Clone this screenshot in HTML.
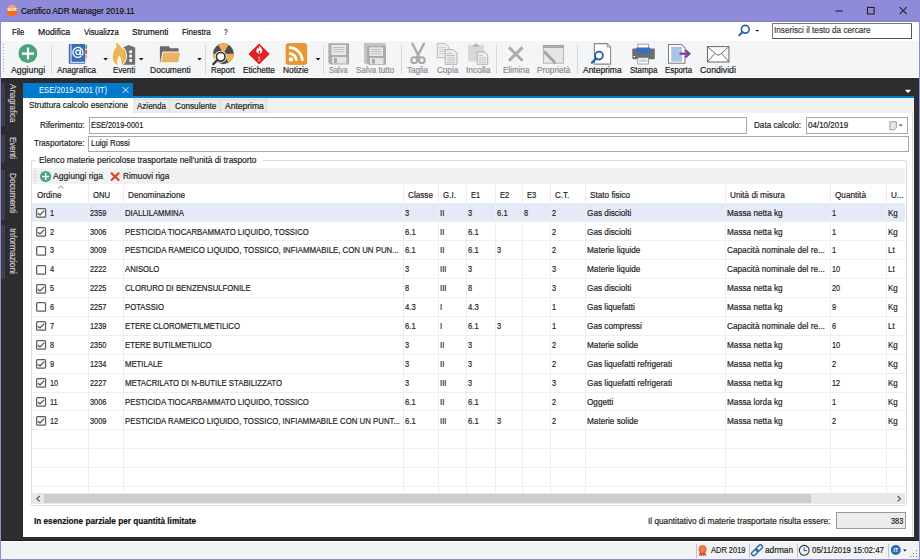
<!DOCTYPE html>
<html><head><meta charset="utf-8">
<style>
*{margin:0;padding:0;box-sizing:border-box}
html,body{width:920px;height:560px;overflow:hidden;background:#8f8bd8;font-family:"Liberation Sans",sans-serif}
.a{position:absolute}
.t{position:absolute;white-space:nowrap;line-height:1;font-family:"Liberation Sans",sans-serif}
svg{position:absolute;overflow:visible}
</style></head><body>
<!-- title bar -->
<div class="a" style="left:0;top:0;width:920px;height:22px;background:#8f8bd8"></div>
<div class="a" style="left:0;top:20px;width:920px;height:2px;background:#8a85d5"></div>
<!-- menu bar -->
<div class="a" style="left:1px;top:22px;width:918px;height:19px;background:#ffffff"></div>
<!-- toolbar -->
<div class="a" style="left:1px;top:41px;width:918px;height:38px;background:#f4f5f7"></div>
<div class="a" style="left:1px;top:77px;width:918px;height:1px;background:#ffffff"></div>
<!-- dark mdi area -->
<div class="a" style="left:1px;top:78px;width:918px;height:464px;background:#2d2d30"></div>
<div class="a" style="left:1px;top:540px;width:918px;height:1px;background:#202022"></div>
<!-- status bar -->
<div class="a" style="left:1px;top:541px;width:918px;height:1px;background:#ffffff"></div>
<div class="a" style="left:1px;top:542px;width:918px;height:17px;background:#f1f2f4"></div>

<!-- sidebar tabs -->
<div class="a" style="left:1px;top:83px;width:4px;height:43px;background:#3f3f46"></div>
<div class="a" style="left:1px;top:135px;width:4px;height:28px;background:#3f3f46"></div>
<div class="a" style="left:1px;top:170px;width:4px;height:50px;background:#3f3f46"></div>
<div class="a" style="left:1px;top:225px;width:4px;height:54px;background:#3f3f46"></div>

<!-- doc tab -->
<div class="a" style="left:23px;top:83px;width:110px;height:14px;background:#007acc"></div>
<div class="a" style="left:23px;top:96px;width:891px;height:2px;background:#007acc"></div>

<!-- content panel -->
<div class="a" style="left:23px;top:98px;width:891px;height:439px;background:#ffffff"></div>
<div class="a" style="left:23px;top:98px;width:891px;height:15px;background:#f0f0f0"></div>
<div class="a" style="left:23px;top:98px;width:110px;height:19px;background:#ffffff"></div>
<div class="a" style="left:133px;top:99px;width:134px;height:14px;background:#ebebeb;border-top:1px solid #dcdcdc"></div>
<div class="a" style="left:169px;top:99px;width:1px;height:14px;background:#dcdcdc"></div>
<div class="a" style="left:220px;top:99px;width:1px;height:14px;background:#dcdcdc"></div>
<div class="a" style="left:266px;top:99px;width:1px;height:14px;background:#dcdcdc"></div>
<div class="a" style="left:912px;top:113px;width:1px;height:424px;background:#d8d8d8"></div>

<!-- inputs -->
<div class="a" style="left:89px;top:117px;width:658px;height:17px;border:1px solid #a8a8a8;background:#fff"></div>
<div class="a" style="left:806px;top:117px;width:102px;height:17px;border:1px solid #a8a8a8;background:#fff"></div>
<div class="a" style="left:88px;top:136px;width:821px;height:16px;border:1px solid #a8a8a8;background:#fff"></div>

<!-- group box -->
<div class="a" style="left:31px;top:160px;width:876px;height:346px;border:1px solid #dcdcdc;border-radius:2px"></div>
<div class="a" style="left:36px;top:156px;width:226px;height:8px;background:#fff"></div>
<!-- group toolbar -->
<div class="a" style="left:32px;top:168px;width:873px;height:16px;background:#f0f1f3"></div>

<!-- grid -->
<div class="a" style="left:32px;top:184px;width:873px;height:19px;background:#ffffff"></div>
<div class="a" style="left:32px;top:203px;width:873px;height:19px;background:#e5eaf8"></div>
<div class="a" style="left:88px;top:185px;width:1px;height:18px;background:#ececec"></div>
<div class="a" style="left:88px;top:203px;width:1px;height:290px;background:#efefef"></div>
<div class="a" style="left:123px;top:185px;width:1px;height:18px;background:#ececec"></div>
<div class="a" style="left:123px;top:203px;width:1px;height:290px;background:#efefef"></div>
<div class="a" style="left:403px;top:185px;width:1px;height:18px;background:#ececec"></div>
<div class="a" style="left:403px;top:203px;width:1px;height:290px;background:#efefef"></div>
<div class="a" style="left:438px;top:185px;width:1px;height:18px;background:#ececec"></div>
<div class="a" style="left:438px;top:203px;width:1px;height:290px;background:#efefef"></div>
<div class="a" style="left:466px;top:185px;width:1px;height:18px;background:#ececec"></div>
<div class="a" style="left:466px;top:203px;width:1px;height:290px;background:#efefef"></div>
<div class="a" style="left:495px;top:185px;width:1px;height:18px;background:#ececec"></div>
<div class="a" style="left:495px;top:203px;width:1px;height:290px;background:#efefef"></div>
<div class="a" style="left:522px;top:185px;width:1px;height:18px;background:#ececec"></div>
<div class="a" style="left:522px;top:203px;width:1px;height:290px;background:#efefef"></div>
<div class="a" style="left:550px;top:185px;width:1px;height:18px;background:#ececec"></div>
<div class="a" style="left:550px;top:203px;width:1px;height:290px;background:#efefef"></div>
<div class="a" style="left:585px;top:185px;width:1px;height:18px;background:#ececec"></div>
<div class="a" style="left:585px;top:203px;width:1px;height:290px;background:#efefef"></div>
<div class="a" style="left:725px;top:185px;width:1px;height:18px;background:#ececec"></div>
<div class="a" style="left:725px;top:203px;width:1px;height:290px;background:#efefef"></div>
<div class="a" style="left:830px;top:185px;width:1px;height:18px;background:#ececec"></div>
<div class="a" style="left:830px;top:203px;width:1px;height:290px;background:#efefef"></div>
<div class="a" style="left:886px;top:185px;width:1px;height:18px;background:#ececec"></div>
<div class="a" style="left:886px;top:203px;width:1px;height:290px;background:#efefef"></div>
<div class="a" style="left:32px;top:221px;width:873px;height:1px;background:#efefef"></div>
<div class="a" style="left:32px;top:240px;width:873px;height:1px;background:#efefef"></div>
<div class="a" style="left:32px;top:259px;width:873px;height:1px;background:#efefef"></div>
<div class="a" style="left:32px;top:278px;width:873px;height:1px;background:#efefef"></div>
<div class="a" style="left:32px;top:297px;width:873px;height:1px;background:#efefef"></div>
<div class="a" style="left:32px;top:316px;width:873px;height:1px;background:#efefef"></div>
<div class="a" style="left:32px;top:335px;width:873px;height:1px;background:#efefef"></div>
<div class="a" style="left:32px;top:354px;width:873px;height:1px;background:#efefef"></div>
<div class="a" style="left:32px;top:373px;width:873px;height:1px;background:#efefef"></div>
<div class="a" style="left:32px;top:392px;width:873px;height:1px;background:#efefef"></div>
<div class="a" style="left:32px;top:410px;width:873px;height:1px;background:#efefef"></div>
<div class="a" style="left:32px;top:429px;width:873px;height:1px;background:#efefef"></div>
<div class="a" style="left:32px;top:448px;width:873px;height:1px;background:#efefef"></div>
<div class="a" style="left:32px;top:467px;width:873px;height:1px;background:#efefef"></div>
<div class="a" style="left:32px;top:486px;width:873px;height:1px;background:#efefef"></div>
<svg style="left:36px;top:208px" width="10" height="10" viewBox="0 0 10 10"><rect x="0.65" y="0.65" width="8.9" height="8.4" rx="0.9" fill="#fff" stroke="#5e5e5e" stroke-width="1.25"/><path d="M1.9 5.2 L4 7 L8.3 2.6" fill="none" stroke="#4a4a4a" stroke-width="1.15"/></svg>
<svg style="left:36px;top:227px" width="10" height="10" viewBox="0 0 10 10"><rect x="0.65" y="0.65" width="8.9" height="8.4" rx="0.9" fill="#fff" stroke="#5e5e5e" stroke-width="1.25"/><path d="M1.9 5.2 L4 7 L8.3 2.6" fill="none" stroke="#4a4a4a" stroke-width="1.15"/></svg>
<svg style="left:36px;top:246px" width="10" height="10" viewBox="0 0 10 10"><rect x="0.65" y="0.65" width="8.9" height="8.4" rx="0.9" fill="#fff" stroke="#5e5e5e" stroke-width="1.25"/></svg>
<svg style="left:36px;top:265px" width="10" height="10" viewBox="0 0 10 10"><rect x="0.65" y="0.65" width="8.9" height="8.4" rx="0.9" fill="#fff" stroke="#5e5e5e" stroke-width="1.25"/></svg>
<svg style="left:36px;top:284px" width="10" height="10" viewBox="0 0 10 10"><rect x="0.65" y="0.65" width="8.9" height="8.4" rx="0.9" fill="#fff" stroke="#5e5e5e" stroke-width="1.25"/><path d="M1.9 5.2 L4 7 L8.3 2.6" fill="none" stroke="#4a4a4a" stroke-width="1.15"/></svg>
<svg style="left:36px;top:302px" width="10" height="10" viewBox="0 0 10 10"><rect x="0.65" y="0.65" width="8.9" height="8.4" rx="0.9" fill="#fff" stroke="#5e5e5e" stroke-width="1.25"/></svg>
<svg style="left:36px;top:321px" width="10" height="10" viewBox="0 0 10 10"><rect x="0.65" y="0.65" width="8.9" height="8.4" rx="0.9" fill="#fff" stroke="#5e5e5e" stroke-width="1.25"/><path d="M1.9 5.2 L4 7 L8.3 2.6" fill="none" stroke="#4a4a4a" stroke-width="1.15"/></svg>
<svg style="left:36px;top:340px" width="10" height="10" viewBox="0 0 10 10"><rect x="0.65" y="0.65" width="8.9" height="8.4" rx="0.9" fill="#fff" stroke="#5e5e5e" stroke-width="1.25"/><path d="M1.9 5.2 L4 7 L8.3 2.6" fill="none" stroke="#4a4a4a" stroke-width="1.15"/></svg>
<svg style="left:36px;top:359px" width="10" height="10" viewBox="0 0 10 10"><rect x="0.65" y="0.65" width="8.9" height="8.4" rx="0.9" fill="#fff" stroke="#5e5e5e" stroke-width="1.25"/><path d="M1.9 5.2 L4 7 L8.3 2.6" fill="none" stroke="#4a4a4a" stroke-width="1.15"/></svg>
<svg style="left:36px;top:378px" width="10" height="10" viewBox="0 0 10 10"><rect x="0.65" y="0.65" width="8.9" height="8.4" rx="0.9" fill="#fff" stroke="#5e5e5e" stroke-width="1.25"/><path d="M1.9 5.2 L4 7 L8.3 2.6" fill="none" stroke="#4a4a4a" stroke-width="1.15"/></svg>
<svg style="left:36px;top:397px" width="10" height="10" viewBox="0 0 10 10"><rect x="0.65" y="0.65" width="8.9" height="8.4" rx="0.9" fill="#fff" stroke="#5e5e5e" stroke-width="1.25"/><path d="M1.9 5.2 L4 7 L8.3 2.6" fill="none" stroke="#4a4a4a" stroke-width="1.15"/></svg>
<svg style="left:36px;top:416px" width="10" height="10" viewBox="0 0 10 10"><rect x="0.65" y="0.65" width="8.9" height="8.4" rx="0.9" fill="#fff" stroke="#5e5e5e" stroke-width="1.25"/><path d="M1.9 5.2 L4 7 L8.3 2.6" fill="none" stroke="#4a4a4a" stroke-width="1.15"/></svg>

<!-- scrollbar -->
<div class="a" style="left:32px;top:493px;width:873px;height:11px;background:#e8e8e8"></div>
<div class="a" style="left:44px;top:494px;width:767px;height:9px;background:#cdcdcd"></div>

<!-- quantity box -->
<div class="a" style="left:836px;top:512px;width:70px;height:17px;border:1px solid #9a9a9a;background:#ececec"></div>

<!-- app icon -->
<svg style="left:0;top:0" width="22" height="21" viewBox="0 0 22 21">
<defs><linearGradient id="ag" x1="0" y1="0" x2="0" y2="1"><stop offset="0" stop-color="#f9b27a"/><stop offset="0.5" stop-color="#f39050"/><stop offset="0.55" stop-color="#ff6a06"/><stop offset="1" stop-color="#ff6a06"/></linearGradient></defs>
<path d="M9.9 5.2 L14.1 5.2 L17.1 8.2 L17.1 12.9 L14.1 15.9 L9.9 15.9 L6.9 12.9 L6.9 8.2 Z" fill="url(#ag)"/>
<text x="12" y="11.4" font-family="Liberation Sans" font-size="3.9" font-weight="bold" fill="#fff" text-anchor="middle">ADR</text>
</svg>
<!-- window controls -->
<svg style="left:830px;top:0" width="90" height="21" viewBox="0 0 90 21">
<rect x="5.5" y="10.4" width="7.5" height="1.1" fill="#222"/>
<rect x="37.5" y="7.4" width="6.6" height="6.6" fill="none" stroke="#222" stroke-width="1.1"/>
<path d="M69.6 7.2 L76.8 14.2 M76.8 7.2 L69.6 14.2" stroke="#222" stroke-width="1.1"/>
</svg>
<!-- search icon -->
<svg style="left:737px;top:23px" width="26" height="15" viewBox="0 0 26 15">
<circle cx="8.3" cy="6.3" r="3.9" fill="none" stroke="#2a64b0" stroke-width="1.7"/>
<path d="M5.6 9 L2.3 12.3" stroke="#2a64b0" stroke-width="2" stroke-linecap="round"/>
<path d="M18.3 7 L22.2 7 L20.25 8.8 Z" fill="#111"/>
</svg>
<!-- search box -->
<div class="a" style="left:772px;top:23px;width:140px;height:16px;border:1px solid #7a7a7a;border-right-color:#555;border-bottom-color:#555;background:#fff"></div>

<!-- toolbar grip -->
<svg style="left:2px;top:43px" width="4" height="32" viewBox="0 0 4 32">
<g fill="#a0a0a0"><rect x="1" y="1" width="1" height="1"/><rect x="1" y="4" width="1" height="1"/><rect x="1" y="7" width="1" height="1"/><rect x="1" y="10" width="1" height="1"/><rect x="1" y="13" width="1" height="1"/><rect x="1" y="16" width="1" height="1"/><rect x="1" y="19" width="1" height="1"/><rect x="1" y="22" width="1" height="1"/><rect x="1" y="25" width="1" height="1"/><rect x="1" y="28" width="1" height="1"/></g></svg>
<!-- separators -->
<div class="a" style="left:51px;top:45px;width:1px;height:29px;background:#d7d8da"></div>
<div class="a" style="left:205px;top:45px;width:1px;height:29px;background:#d7d8da"></div>
<div class="a" style="left:323px;top:45px;width:1px;height:29px;background:#d7d8da"></div>
<div class="a" style="left:401px;top:45px;width:1px;height:29px;background:#d7d8da"></div>
<div class="a" style="left:496px;top:45px;width:1px;height:29px;background:#d7d8da"></div>
<div class="a" style="left:577px;top:45px;width:1px;height:29px;background:#d7d8da"></div>
<!-- dropdown arrows -->
<svg style="left:0;top:0" width="920" height="80" viewBox="0 0 920 80"><g fill="#111">
<path d="M103.3 58 L107.9 58 L105.6 60.6 Z"/>
<path d="M138.9 58 L143.5 58 L141.2 60.6 Z"/>
<path d="M197.2 58 L201.8 58 L199.5 60.6 Z"/>
<path d="M315.8 58 L320.4 58 L318.1 60.6 Z"/>
</g></svg>

<!-- Aggiungi -->
<svg style="left:0;top:0" width="40" height="70" viewBox="0 0 40 70">
<circle cx="27.9" cy="53.5" r="9.4" fill="#4ba57a"/>
<rect x="26.9" y="47.6" width="2.2" height="11.9" fill="#fff"/>
<rect x="21.9" y="52.5" width="12.2" height="2.3" fill="#fff"/>
</svg>
<!-- Anagrafica -->
<svg style="left:60px;top:40px" width="30" height="28" viewBox="60 40 30 28">
<rect x="68.8" y="44" width="16.4" height="19.8" rx="0.9" fill="#3a6db9"/>
<rect x="70.5" y="44.6" width="1" height="18" fill="#f4f7fb"/>
<rect x="70.5" y="61.8" width="14" height="1" fill="#f4f7fb"/>
<path d="M81.2 56.2 A5 5 0 1 1 82.9 52 L82.9 53.4 Q82.9 55 81.6 55 Q80.3 55 80.3 53.4 L80.3 49.5" fill="none" stroke="#fff" stroke-width="1.2"/>
<circle cx="78" cy="52.3" r="2.2" fill="none" stroke="#fff" stroke-width="1.2"/>
<rect x="85.4" y="44.9" width="1.7" height="3.9" fill="#3fa86a"/>
<rect x="85.4" y="49.9" width="1.7" height="4" fill="#d9502a"/>
<rect x="85.4" y="55" width="1.7" height="3.7" fill="#f0b050"/>
</svg>
<!-- Eventi -->
<svg style="left:108px;top:40px" width="32" height="28" viewBox="108 40 32 28">
<path d="M123 47.6 L128.6 45 L135.2 47.6 L135.2 64.8 L123 64.8 Z" fill="#707070"/>
<rect x="129.3" y="50.4" width="2.7" height="2.7" fill="#fff"/>
<rect x="129.3" y="54.7" width="2.7" height="2.7" fill="#fff"/>
<rect x="129.3" y="59.1" width="2.7" height="2.7" fill="#fff"/>
<path d="M116.5 43 C118.5 44.5 121 46.5 121.8 49.5 L123.3 48.8 C125.5 51.5 126 54 125.8 57 C125.5 60.5 123.8 63 121.6 64.4 C122.5 62 122 58.5 119.3 54.8 C117.5 57.5 115.8 60.5 117 64.4 C114.5 63 113 60.5 113.1 57.5 C113.2 54 114.5 51 115.3 48.6 L116 49.8 C116.8 47.5 117 45.5 116.5 43 Z" fill="#fff" stroke="#fff" stroke-width="2.4" stroke-linejoin="round"/>
<path d="M116.5 43 C118.5 44.5 121 46.5 121.8 49.5 L123.3 48.8 C125.5 51.5 126 54 125.8 57 C125.5 60.5 123.8 63 121.6 64.4 C122.5 62 122 58.5 119.3 54.8 C117.5 57.5 115.8 60.5 117 64.4 C114.5 63 113 60.5 113.1 57.5 C113.2 54 114.5 51 115.3 48.6 L116 49.8 C116.8 47.5 117 45.5 116.5 43 Z" fill="#ecb35e" stroke="#f1b42c" stroke-width="0.9" stroke-linejoin="round"/>
</svg>
<!-- Documenti -->
<svg style="left:155px;top:40px" width="30" height="28" viewBox="155 40 30 28">
<path d="M159.9 46.2 L168.8 46.2 L170.3 48.2 L178.6 48.2 L178.6 62.3 L159.9 62.3 Z" fill="#6a6a6a"/>
<path d="M162.9 52 L180.8 52 L178.6 62.8 L160.7 62.8 Z" fill="#e9b35f" stroke="#fff" stroke-width="0.9" stroke-linejoin="round"/>
</svg>
<!-- Report -->
<svg style="left:208px;top:40px" width="30" height="28" viewBox="208 40 30 28">
<circle cx="223.4" cy="53.75" r="10.4" fill="#4d4d4d"/>
<path d="M223.4 53.75 L218.2 44.7 A10.4 10.4 0 0 1 228.6 44.7 Z" fill="#eeb055"/>
<path d="M223.4 53.75 L233.8 53.75 A10.4 10.4 0 0 1 228.6 62.8 Z" fill="#eeb055"/>
<path d="M223.4 53.75 L218.2 62.8 A10.4 10.4 0 0 1 213 53.75 Z" fill="#eeb055"/>
<circle cx="220.75" cy="56.75" r="5.9" fill="#fff"/>
<path d="M217.5 60 L213 64.5" stroke="#fff" stroke-width="4" stroke-linecap="round"/>
<circle cx="220.75" cy="56.75" r="4.3" fill="#fff" stroke="#3a3a3a" stroke-width="1.7"/>
<path d="M217.3 60.2 L213.3 64.2" stroke="#3a3a3a" stroke-width="2.4" stroke-linecap="round"/>
</svg>
<!-- Etichette -->
<svg style="left:244px;top:40px" width="30" height="28" viewBox="244 40 30 28">
<path d="M259.1 43 L270.2 54 L259.1 65 L248 54 Z" fill="#e02424" stroke="#fff" stroke-width="0.8" stroke-linejoin="round"/>
<path d="M259.2 45.4 C260.3 47 262.4 48.6 262.3 50.9 C262.2 52.6 260.9 53.5 259.2 53.5 C257.5 53.5 256.2 52.5 256.3 50.7 C256.4 49.3 257.3 48.6 257.8 47.6 C258.2 48.3 258.4 48.8 258.7 49.1 C259.2 47.9 259.4 46.6 259.2 45.4 Z" fill="#fff"/>
<ellipse cx="259.4" cy="51.9" rx="0.9" ry="1.2" fill="#e02424"/>
<path d="M257.9 57.3 L260 57.3 L258.9 58.8 C260.1 58.9 260.3 61 258.6 61 C258.2 61 257.9 60.8 257.8 60.6" fill="none" stroke="#fff" stroke-width="0.7"/>
</svg>
<!-- Notizie -->
<svg style="left:282px;top:40px" width="30" height="28" viewBox="282 40 30 28">
<rect x="286.1" y="43.6" width="20.6" height="20.8" rx="2.2" fill="#e9982f" stroke="#dc8a26" stroke-width="0.8"/>
<circle cx="290.9" cy="59.4" r="2.2" fill="#fff"/>
<path d="M289 53.3 A7.3 7.3 0 0 1 296.3 60.9" fill="none" stroke="#fff" stroke-width="2.8"/>
<path d="M289 47.6 A13 13 0 0 1 302.2 60.9" fill="none" stroke="#fff" stroke-width="2.8"/>
</svg>
<!-- Salva -->
<svg style="left:324px;top:40px" width="30" height="28" viewBox="324 40 30 28">
<path d="M328.4 43.3 L349.1 43.3 L349.1 64.4 L330.3 64.4 L328.4 62.5 Z" fill="#ababab"/>
<rect x="331.5" y="45" width="14.5" height="10" fill="#e9e9e9"/>
<rect x="333" y="47" width="11.5" height="0.8" fill="#b5b5b5"/>
<rect x="333" y="49.2" width="11.5" height="0.8" fill="#b5b5b5"/>
<rect x="333" y="51.4" width="11.5" height="0.8" fill="#b5b5b5"/>
<rect x="332" y="57" width="14.5" height="6.5" fill="#e4e4e4"/>
<rect x="334" y="58" width="3" height="5" fill="#a8a8a8"/>
</svg>
<!-- Salva tutto -->
<svg style="left:360px;top:40px" width="30" height="28" viewBox="360 40 30 28">
<path d="M363.9 43 L385.3 43 L386 45.5 L366.9 45.5 L366.9 64.8 L364 63 Z" fill="#c4c4c4"/>
<path d="M366.9 45.5 L386 45.5 L386 64.8 L368.5 64.8 L366.9 63.2 Z" fill="#ababab"/>
<rect x="369.5" y="47.3" width="13.5" height="8.7" fill="#e9e9e9"/>
<rect x="371" y="49" width="10.5" height="0.8" fill="#b5b5b5"/>
<rect x="371" y="51.2" width="10.5" height="0.8" fill="#b5b5b5"/>
<rect x="371" y="53.4" width="10.5" height="0.8" fill="#b5b5b5"/>
<rect x="370" y="58" width="13.5" height="6" fill="#e4e4e4"/>
<rect x="372" y="59" width="2.8" height="4.6" fill="#a8a8a8"/>
</svg>
<!-- Taglia -->
<svg style="left:404px;top:40px" width="30" height="28" viewBox="404 40 30 28">
<path d="M412.4 43.8 L419.2 57 M423.9 43.8 L417.1 57" stroke="#a9a9a9" stroke-width="2.4" stroke-linecap="round"/>
<circle cx="414.2" cy="60.2" r="2.9" fill="none" stroke="#a9a9a9" stroke-width="2"/>
<circle cx="421.8" cy="60.2" r="2.9" fill="none" stroke="#a9a9a9" stroke-width="2"/>
</svg>
<!-- Copia -->
<svg style="left:434px;top:40px" width="30" height="28" viewBox="434 40 30 28">
<path d="M437.3 43.5 L445.5 43.5 L449 47 L449 57.7 L437.3 57.7 Z" fill="#ededed" stroke="#b9b9b9" stroke-width="0.9"/>
<g fill="#c5c5c5"><rect x="439" y="47" width="6" height="0.7"/><rect x="439" y="49" width="7" height="0.7"/><rect x="439" y="51" width="7" height="0.7"/><rect x="439" y="53" width="7" height="0.7"/></g>
<path d="M445.2 49.7 L453.5 49.7 L457 53.2 L457 64.3 L445.2 64.3 Z" fill="#ededed" stroke="#aaaaaa" stroke-width="0.9"/>
<g fill="#b5b5b5"><rect x="447" y="53" width="5" height="0.8"/><rect x="447" y="55.2" width="8" height="0.8"/><rect x="447" y="57.4" width="8" height="0.8"/><rect x="447" y="59.6" width="8" height="0.8"/><rect x="447" y="61.8" width="8" height="0.8"/></g>
</svg>
<!-- Incolla -->
<svg style="left:464px;top:40px" width="30" height="28" viewBox="464 40 30 28">
<rect x="468.1" y="45.2" width="15.8" height="16.3" fill="#d7d7d7"/>
<path d="M472.5 46.5 L479.5 46.5 L479 45 L477.4 45 A1.4 1.4 0 0 0 474.6 45 L473 45 Z" fill="#b0b0b0"/>
<path d="M477.2 52 L485 52 L487.7 54.7 L487.7 64.3 L477.2 64.3 Z" fill="#ededed" stroke="#aaaaaa" stroke-width="0.9"/>
<g fill="#b5b5b5"><rect x="479" y="55.3" width="3" height="0.8"/><rect x="479" y="57.5" width="7" height="0.8"/><rect x="479" y="59.7" width="7" height="0.8"/><rect x="479" y="61.9" width="7" height="0.8"/></g>
</svg>
<!-- Elimina -->
<svg style="left:504px;top:40px" width="24" height="28" viewBox="504 40 24 28">
<path d="M509 47.4 L522.6 60.7 M522.6 47.4 L509 60.7" stroke="#ababab" stroke-width="3"/>
</svg>
<!-- Proprieta -->
<svg style="left:540px;top:40px" width="30" height="28" viewBox="540 40 30 28">
<rect x="543.4" y="45.4" width="20.2" height="17.8" fill="#e6e6e6" stroke="#b3b3b3" stroke-width="0.9"/>
<rect x="543" y="45" width="21" height="3" fill="#a9a9a9"/>
<path d="M544 51.6 L554 61.6" stroke="#a3a3a3" stroke-width="2.8"/><path d="M552.6 62.8 L556.4 64.4 L554.8 60.6 Z" fill="#a3a3a3"/>
</svg>
<!-- Anteprima -->
<svg style="left:588px;top:40px" width="30" height="28" viewBox="588 40 30 28">
<path d="M594.4 43.6 L607.2 43.6 L610.6 47 L610.6 64.1 L594.4 64.1 Z" fill="#fff" stroke="#858585" stroke-width="1.05"/>
<path d="M607.2 43.6 L607.2 47 L610.6 47" fill="#e0e0e0" stroke="#858585" stroke-width="0.8"/>
<circle cx="599" cy="55.6" r="3.9" fill="#fff" stroke="#1f5fae" stroke-width="1.8"/>
<path d="M596 58.7 L592 62.6" stroke="#1f5fae" stroke-width="2.3" stroke-linecap="round"/>
</svg>
<!-- Stampa -->
<svg style="left:628px;top:40px" width="30" height="28" viewBox="628 40 30 28">
<rect x="637.8" y="44.2" width="10.8" height="5" fill="#fff" stroke="#8a8a8a" stroke-width="0.8"/>
<rect x="632.3" y="48.4" width="22.5" height="10.9" rx="1" fill="#6e6e6e"/>
<rect x="636.3" y="47.6" width="14" height="6.1" rx="0.8" fill="#3a70bd"/>
<rect x="633.5" y="56" width="1.6" height="1" fill="#fff"/>
<rect x="637.8" y="57.8" width="10.8" height="6.2" fill="#fff" stroke="#8a8a8a" stroke-width="0.8"/>
<rect x="639" y="59.5" width="8.5" height="2.5" fill="#c5d6ec"/>
</svg>
<!-- Esporta -->
<svg style="left:664px;top:40px" width="30" height="28" viewBox="664 40 30 28">
<path d="M668.5 44.5 L681.5 44.5 L685 48 L685 63.3 L668.5 63.3 Z" fill="#fff" stroke="#7e7e7e" stroke-width="1.05"/>
<rect x="671.2" y="46.8" width="11" height="14.9" fill="#a9c4e6"/>
<rect x="682.2" y="48.5" width="2" height="4" fill="#fff"/>
<path d="M679.6 53.7 L688.5 53.7" stroke="#7b3aa8" stroke-width="2.2"/>
<path d="M685.3 50 L689.4 53.7 L685.3 57.4" fill="none" stroke="#7b3aa8" stroke-width="2.1"/>
</svg>
<!-- Condividi -->
<svg style="left:704px;top:40px" width="30" height="28" viewBox="704 40 30 28">
<rect x="707.5" y="46.6" width="21.4" height="15.4" fill="#fff" stroke="#727272" stroke-width="1.1"/>
<path d="M707.8 47 L716.5 54.5 Q718.2 55.8 720 54.5 L728.6 47" fill="none" stroke="#6a6a6a" stroke-width="1"/>
<path d="M707.8 61.6 L714.8 53.4 M728.6 61.6 L721.6 53.4" stroke="#6a6a6a" stroke-width="1"/>
</svg>

<!-- doc tab close x -->
<svg style="left:120px;top:84px" width="12" height="12" viewBox="120 84 12 12">
<path d="M122.8 87.2 L128.4 92.8 M128.4 87.2 L122.8 92.8" stroke="#fff" stroke-width="0.95"/>
</svg>
<!-- tab strip dropdown -->
<svg style="left:900px;top:86px" width="16" height="10" viewBox="900 86 16 10"><path d="M904.8 89.8 L911.2 89.8 L908 92.9 Z" fill="#fff"/></svg>

<!-- date picker icon -->
<svg style="left:886px;top:119px" width="20" height="14" viewBox="886 119 20 14">
<path d="M889.8 121.8 L896.3 121.8 L896.3 128 L894.3 129.8 L889.8 129.8 Z" fill="#e6e6e6" stroke="#8a8a8a" stroke-width="0.8"/>
<path d="M898.5 124.5 L902.8 124.5 L900.65 126.6 Z" fill="#2a5aa0"/>
</svg>

<!-- group toolbar -->
<svg style="left:32px;top:168px" width="100" height="17" viewBox="32 168 100 17">
<g fill="#a5a5a5"><rect x="34.5" y="171" width="1" height="1"/><rect x="34.5" y="174" width="1" height="1"/><rect x="34.5" y="177" width="1" height="1"/><rect x="34.5" y="180" width="1" height="1"/></g>
<circle cx="45.6" cy="176.5" r="5.6" fill="#4ba57a"/>
<rect x="45" y="173" width="1.4" height="7" fill="#fff"/>
<rect x="42.1" y="175.8" width="7" height="1.4" fill="#fff"/>
<path d="M111 172.8 L119.2 180.4 M119.2 172.8 L111 180.4" stroke="#d9401c" stroke-width="2.1"/>
</svg>
<!-- sort arrow -->
<svg style="left:56px;top:184px" width="10" height="6" viewBox="56 184 10 6"><path d="M58 188.5 L60.7 186 L63.4 188.5" fill="none" stroke="#666" stroke-width="0.8"/></svg>

<!-- scrollbar arrows -->
<svg style="left:32px;top:493px" width="880" height="12" viewBox="32 493 880 12">
<path d="M39.8 496 L36.8 498.7 L39.8 501.4" fill="none" stroke="#555" stroke-width="1.1"/>
<path d="M897.5 496 L900.5 498.7 L897.5 501.4" fill="none" stroke="#555" stroke-width="1.1"/>
</svg>

<!-- status bar -->
<div class="a" style="left:696px;top:544px;width:1px;height:14px;background:#c4c4c4"></div>
<div class="a" style="left:749px;top:544px;width:1px;height:14px;background:#c4c4c4"></div>
<div class="a" style="left:797px;top:544px;width:1px;height:14px;background:#c4c4c4"></div>
<div class="a" style="left:888px;top:544px;width:1px;height:14px;background:#c4c4c4"></div>
<svg style="left:690px;top:540px" width="230" height="20" viewBox="690 540 230 20">
<path d="M700 551.5 L698.6 556 L700.8 555.2 L702 556.6 L702.6 552.6 Z M705 551.5 L706.4 556 L704.2 555.2 L703 556.6 L702.4 552.6 Z" fill="#d04a2a"/>
<circle cx="702.5" cy="549.2" r="4" fill="#e8663a"/>
<circle cx="702.5" cy="549.2" r="2.6" fill="#f08050"/>
<g transform="rotate(-45 757 550.3)" fill="none" stroke="#2a64b0" stroke-width="1.4">
<rect x="750.2" y="548.3" width="7.6" height="4" rx="2"/>
<rect x="756.2" y="548.3" width="7.6" height="4" rx="2"/>
</g>
<circle cx="804.2" cy="550.3" r="4.9" fill="none" stroke="#333" stroke-width="1.1"/>
<path d="M804.2 547.2 L804.2 550.6 L807 550.6" fill="none" stroke="#3a6fc0" stroke-width="1.1"/>
<circle cx="895.8" cy="550" r="5" fill="#2a6ab8"/>
<text x="895.8" y="551.9" font-family="Liberation Sans" font-size="5" font-weight="bold" fill="#fff" text-anchor="middle">IT</text>
<path d="M903 549.5 L906.6 549.5 L904.8 551.5 Z" fill="#111"/>
<g fill="#777"><rect x="916" y="553" width="1" height="1"/><rect x="913" y="556" width="1" height="1"/><rect x="916" y="556" width="1" height="1"/><rect x="910.5" y="556" width="1" height="1"/><rect x="913" y="553" width="1" height="1"/><rect x="916" y="550" width="1" height="1"/></g>
</svg>

<span class="t" style="top:84.40px;font-size:9.2px;color:#c8c8c8;-webkit-text-stroke:0.2px #c8c8c8;writing-mode:vertical-rl;left:7.60px;transform-origin:0 0;transform:scaleY(0.8785);">Anagrafica</span>
<span class="t" style="top:137.30px;font-size:9.2px;color:#c8c8c8;-webkit-text-stroke:0.2px #c8c8c8;writing-mode:vertical-rl;left:7.60px;transform-origin:0 0;transform:scaleY(0.8612);">Eventi</span>
<span class="t" style="top:173.00px;font-size:9.2px;color:#c8c8c8;-webkit-text-stroke:0.2px #c8c8c8;writing-mode:vertical-rl;left:7.60px;transform-origin:0 0;transform:scaleY(0.9153);">Documenti</span>
<span class="t" style="top:228.20px;font-size:9.2px;color:#c8c8c8;-webkit-text-stroke:0.2px #c8c8c8;writing-mode:vertical-rl;left:7.60px;transform-origin:0 0;transform:scaleY(0.9191);">Informazioni</span>
<span class="t" style="top:6.81px;font-size:9.2px;color:#111;-webkit-text-stroke:0.2px #111;left:21.20px;transform-origin:0 0;transform:scaleX(0.8803);">Certifico ADR Manager 2019.11</span>
<span class="t" style="top:27.51px;font-size:9.2px;color:#111;-webkit-text-stroke:0.2px #111;left:11.70px;transform-origin:0 0;transform:scaleX(0.8304);">File</span>
<span class="t" style="top:27.51px;font-size:9.2px;color:#111;-webkit-text-stroke:0.2px #111;left:37.90px;transform-origin:0 0;transform:scaleX(0.9381);">Modifica</span>
<span class="t" style="top:27.51px;font-size:9.2px;color:#111;-webkit-text-stroke:0.2px #111;left:83.60px;transform-origin:0 0;transform:scaleX(0.8422);">Visualizza</span>
<span class="t" style="top:27.51px;font-size:9.2px;color:#111;-webkit-text-stroke:0.2px #111;left:131.90px;transform-origin:0 0;transform:scaleX(0.9281);">Strumenti</span>
<span class="t" style="top:27.51px;font-size:9.2px;color:#111;-webkit-text-stroke:0.2px #111;left:181.50px;transform-origin:0 0;transform:scaleX(0.8644);">Finestra</span>
<span class="t" style="top:27.51px;font-size:9.2px;color:#111;-webkit-text-stroke:0.2px #111;left:224.00px;transform-origin:0 0;transform:scaleX(0.6829);">?</span>
<span class="t" style="top:26.31px;font-size:9.2px;color:#3c3c3c;-webkit-text-stroke:0.2px #3c3c3c;left:774.00px;transform-origin:0 0;transform:scaleX(0.8881);">Inserisci il testo da cercare</span>
<span class="t" style="top:66.21px;font-size:9.2px;color:#1a1a1a;-webkit-text-stroke:0.2px #1a1a1a;left:10.80px;transform-origin:0 0;transform:scaleX(0.9534);">Aggiungi</span>
<span class="t" style="top:66.21px;font-size:9.2px;color:#1a1a1a;-webkit-text-stroke:0.2px #1a1a1a;left:57.20px;transform-origin:0 0;transform:scaleX(0.8899);">Anagrafica</span>
<span class="t" style="top:66.21px;font-size:9.2px;color:#1a1a1a;-webkit-text-stroke:0.2px #1a1a1a;left:113.00px;transform-origin:0 0;transform:scaleX(0.8729);">Eventi</span>
<span class="t" style="top:66.21px;font-size:9.2px;color:#1a1a1a;-webkit-text-stroke:0.2px #1a1a1a;left:149.60px;transform-origin:0 0;transform:scaleX(0.9266);">Documenti</span>
<span class="t" style="top:66.21px;font-size:9.2px;color:#1a1a1a;-webkit-text-stroke:0.2px #1a1a1a;left:211.30px;transform-origin:0 0;transform:scaleX(0.8594);">Report</span>
<span class="t" style="top:66.21px;font-size:9.2px;color:#1a1a1a;-webkit-text-stroke:0.2px #1a1a1a;left:243.00px;transform-origin:0 0;transform:scaleX(0.8923);">Etichette</span>
<span class="t" style="top:66.21px;font-size:9.2px;color:#1a1a1a;-webkit-text-stroke:0.2px #1a1a1a;left:283.30px;transform-origin:0 0;transform:scaleX(0.9077);">Notizie</span>
<span class="t" style="top:66.21px;font-size:9.2px;color:#8c8c8c;-webkit-text-stroke:0.2px #8c8c8c;left:329.00px;transform-origin:0 0;transform:scaleX(0.8049);">Salva</span>
<span class="t" style="top:66.21px;font-size:9.2px;color:#8c8c8c;-webkit-text-stroke:0.2px #8c8c8c;left:356.00px;transform-origin:0 0;transform:scaleX(0.8797);">Salva tutto</span>
<span class="t" style="top:66.21px;font-size:9.2px;color:#8c8c8c;-webkit-text-stroke:0.2px #8c8c8c;left:406.90px;transform-origin:0 0;transform:scaleX(0.8786);">Taglia</span>
<span class="t" style="top:66.21px;font-size:9.2px;color:#8c8c8c;-webkit-text-stroke:0.2px #8c8c8c;left:436.50px;transform-origin:0 0;transform:scaleX(0.8828);">Copia</span>
<span class="t" style="top:66.21px;font-size:9.2px;color:#8c8c8c;-webkit-text-stroke:0.2px #8c8c8c;left:465.60px;transform-origin:0 0;transform:scaleX(0.9186);">Incolla</span>
<span class="t" style="top:66.21px;font-size:9.2px;color:#8c8c8c;-webkit-text-stroke:0.2px #8c8c8c;left:502.60px;transform-origin:0 0;transform:scaleX(0.8830);">Elimina</span>
<span class="t" style="top:66.21px;font-size:9.2px;color:#8c8c8c;-webkit-text-stroke:0.2px #8c8c8c;left:536.90px;transform-origin:0 0;transform:scaleX(0.8959);">Proprietà</span>
<span class="t" style="top:66.21px;font-size:9.2px;color:#1a1a1a;-webkit-text-stroke:0.2px #1a1a1a;left:582.70px;transform-origin:0 0;transform:scaleX(0.9218);">Anteprima</span>
<span class="t" style="top:66.21px;font-size:9.2px;color:#1a1a1a;-webkit-text-stroke:0.2px #1a1a1a;left:629.70px;transform-origin:0 0;transform:scaleX(0.8620);">Stampa</span>
<span class="t" style="top:66.21px;font-size:9.2px;color:#1a1a1a;-webkit-text-stroke:0.2px #1a1a1a;left:665.30px;transform-origin:0 0;transform:scaleX(0.8525);">Esporta</span>
<span class="t" style="top:66.21px;font-size:9.2px;color:#1a1a1a;-webkit-text-stroke:0.2px #1a1a1a;left:700.10px;transform-origin:0 0;transform:scaleX(0.9498);">Condividi</span>
<span class="t" style="top:85.81px;font-size:9.2px;color:#ffffff;left:39.20px;transform-origin:0 0;transform:scaleX(0.8321);">ESE/2019-0001 (IT)</span>
<span class="t" style="top:101.21px;font-size:9.2px;color:#1e1e1e;-webkit-text-stroke:0.2px #1e1e1e;left:28.70px;transform-origin:0 0;transform:scaleX(0.8942);">Struttura calcolo esenzione</span>
<span class="t" style="top:102.31px;font-size:9.2px;color:#1e1e1e;-webkit-text-stroke:0.2px #1e1e1e;left:137.00px;transform-origin:0 0;transform:scaleX(0.8734);">Azienda</span>
<span class="t" style="top:102.31px;font-size:9.2px;color:#1e1e1e;-webkit-text-stroke:0.2px #1e1e1e;left:174.80px;transform-origin:0 0;transform:scaleX(0.8906);">Consulente</span>
<span class="t" style="top:102.31px;font-size:9.2px;color:#1e1e1e;-webkit-text-stroke:0.2px #1e1e1e;left:225.20px;transform-origin:0 0;transform:scaleX(0.9266);">Anteprima</span>
<span class="t" style="top:121.41px;font-size:9.2px;color:#1e1e1e;-webkit-text-stroke:0.2px #1e1e1e;left:39.60px;transform-origin:0 0;transform:scaleX(0.9004);">Riferimento:</span>
<span class="t" style="top:121.41px;font-size:9.2px;color:#1e1e1e;-webkit-text-stroke:0.2px #1e1e1e;left:91.40px;transform-origin:0 0;transform:scaleX(0.8062);">ESE/2019-0001</span>
<span class="t" style="top:139.21px;font-size:9.2px;color:#1e1e1e;-webkit-text-stroke:0.2px #1e1e1e;left:34.00px;transform-origin:0 0;transform:scaleX(0.8822);">Trasportatore:</span>
<span class="t" style="top:139.21px;font-size:9.2px;color:#1e1e1e;-webkit-text-stroke:0.2px #1e1e1e;left:90.80px;transform-origin:0 0;transform:scaleX(0.8634);">Luigi Rossi</span>
<span class="t" style="top:121.41px;font-size:9.2px;color:#1e1e1e;-webkit-text-stroke:0.2px #1e1e1e;left:753.70px;transform-origin:0 0;transform:scaleX(0.8847);">Data calcolo:</span>
<span class="t" style="top:121.41px;font-size:9.2px;color:#1e1e1e;-webkit-text-stroke:0.2px #1e1e1e;left:807.50px;transform-origin:0 0;transform:scaleX(0.8720);">04/10/2019</span>
<span class="t" style="top:156.21px;font-size:9.2px;color:#1e1e1e;-webkit-text-stroke:0.2px #1e1e1e;left:38.50px;transform-origin:0 0;transform:scaleX(0.9092);">Elenco materie pericolose trasportate nell'unità di trasporto</span>
<span class="t" style="top:171.91px;font-size:9.2px;color:#1e1e1e;-webkit-text-stroke:0.2px #1e1e1e;left:53.00px;transform-origin:0 0;transform:scaleX(0.9321);">Aggiungi riga</span>
<span class="t" style="top:171.91px;font-size:9.2px;color:#1e1e1e;-webkit-text-stroke:0.2px #1e1e1e;left:122.70px;transform-origin:0 0;transform:scaleX(0.9067);">Rimuovi riga</span>
<span class="t" style="top:190.51px;font-size:9.2px;color:#1e1e1e;-webkit-text-stroke:0.2px #1e1e1e;left:36.70px;transform-origin:0 0;transform:scaleX(0.8880);">Ordine</span>
<span class="t" style="top:190.51px;font-size:9.2px;color:#1e1e1e;-webkit-text-stroke:0.2px #1e1e1e;left:92.60px;transform-origin:0 0;transform:scaleX(0.8413);">ONU</span>
<span class="t" style="top:190.51px;font-size:9.2px;color:#1e1e1e;-webkit-text-stroke:0.2px #1e1e1e;left:127.60px;transform-origin:0 0;transform:scaleX(0.8931);">Denominazione</span>
<span class="t" style="top:190.51px;font-size:9.2px;color:#1e1e1e;-webkit-text-stroke:0.2px #1e1e1e;left:407.60px;transform-origin:0 0;transform:scaleX(0.8880);">Classe</span>
<span class="t" style="top:190.51px;font-size:9.2px;color:#1e1e1e;-webkit-text-stroke:0.2px #1e1e1e;left:442.60px;transform-origin:0 0;transform:scaleX(0.8693);">G.I.</span>
<span class="t" style="top:190.51px;font-size:9.2px;color:#1e1e1e;-webkit-text-stroke:0.2px #1e1e1e;left:470.60px;transform-origin:0 0;transform:scaleX(0.8226);">E1</span>
<span class="t" style="top:190.51px;font-size:9.2px;color:#1e1e1e;-webkit-text-stroke:0.2px #1e1e1e;left:499.60px;transform-origin:0 0;transform:scaleX(0.8226);">E2</span>
<span class="t" style="top:190.51px;font-size:9.2px;color:#1e1e1e;-webkit-text-stroke:0.2px #1e1e1e;left:526.60px;transform-origin:0 0;transform:scaleX(0.8226);">E3</span>
<span class="t" style="top:190.51px;font-size:9.2px;color:#1e1e1e;-webkit-text-stroke:0.2px #1e1e1e;left:554.60px;transform-origin:0 0;transform:scaleX(0.8693);">C.T.</span>
<span class="t" style="top:190.51px;font-size:9.2px;color:#1e1e1e;-webkit-text-stroke:0.2px #1e1e1e;left:589.60px;transform-origin:0 0;transform:scaleX(0.8927);">Stato fisico</span>
<span class="t" style="top:190.51px;font-size:9.2px;color:#1e1e1e;-webkit-text-stroke:0.2px #1e1e1e;left:729.60px;transform-origin:0 0;transform:scaleX(0.8937);">Unità di misura</span>
<span class="t" style="top:190.51px;font-size:9.2px;color:#1e1e1e;-webkit-text-stroke:0.2px #1e1e1e;left:834.60px;transform-origin:0 0;transform:scaleX(0.8904);">Quantità</span>
<span class="t" style="top:190.51px;font-size:9.2px;color:#1e1e1e;-webkit-text-stroke:0.2px #1e1e1e;left:890.60px;transform-origin:0 0;transform:scaleX(0.8834);">U...</span>
<span class="t" style="top:208.61px;font-size:9.2px;color:#1e1e1e;-webkit-text-stroke:0.2px #1e1e1e;left:50.40px;transform-origin:0 0;transform:scaleX(0.8039);">1</span>
<span class="t" style="top:208.61px;font-size:9.2px;color:#1e1e1e;-webkit-text-stroke:0.2px #1e1e1e;left:90.20px;transform-origin:0 0;transform:scaleX(0.8039);">2359</span>
<span class="t" style="top:208.61px;font-size:9.2px;color:#1e1e1e;-webkit-text-stroke:0.2px #1e1e1e;left:125.20px;transform-origin:0 0;transform:scaleX(0.8413);">DIALLILAMMINA</span>
<span class="t" style="top:208.61px;font-size:9.2px;color:#1e1e1e;-webkit-text-stroke:0.2px #1e1e1e;left:405.20px;transform-origin:0 0;transform:scaleX(0.8039);">3</span>
<span class="t" style="top:208.61px;font-size:9.2px;color:#1e1e1e;-webkit-text-stroke:0.2px #1e1e1e;left:440.20px;transform-origin:0 0;transform:scaleX(0.8413);">II</span>
<span class="t" style="top:208.61px;font-size:9.2px;color:#1e1e1e;-webkit-text-stroke:0.2px #1e1e1e;left:468.20px;transform-origin:0 0;transform:scaleX(0.8039);">3</span>
<span class="t" style="top:208.61px;font-size:9.2px;color:#1e1e1e;-webkit-text-stroke:0.2px #1e1e1e;left:497.20px;transform-origin:0 0;transform:scaleX(0.8351);">6.1</span>
<span class="t" style="top:208.61px;font-size:9.2px;color:#1e1e1e;-webkit-text-stroke:0.2px #1e1e1e;left:524.20px;transform-origin:0 0;transform:scaleX(0.8039);">8</span>
<span class="t" style="top:208.61px;font-size:9.2px;color:#1e1e1e;-webkit-text-stroke:0.2px #1e1e1e;left:552.20px;transform-origin:0 0;transform:scaleX(0.8039);">2</span>
<span class="t" style="top:208.61px;font-size:9.2px;color:#1e1e1e;-webkit-text-stroke:0.2px #1e1e1e;left:587.20px;transform-origin:0 0;transform:scaleX(0.8931);">Gas disciolti</span>
<span class="t" style="top:208.61px;font-size:9.2px;color:#1e1e1e;-webkit-text-stroke:0.2px #1e1e1e;left:727.20px;transform-origin:0 0;transform:scaleX(0.8934);">Massa netta kg</span>
<span class="t" style="top:208.61px;font-size:9.2px;color:#1e1e1e;-webkit-text-stroke:0.2px #1e1e1e;left:832.20px;transform-origin:0 0;transform:scaleX(0.8039);">1</span>
<span class="t" style="top:208.61px;font-size:9.2px;color:#1e1e1e;-webkit-text-stroke:0.2px #1e1e1e;left:888.20px;transform-origin:0 0;transform:scaleX(0.8693);">Kg</span>
<span class="t" style="top:227.52px;font-size:9.2px;color:#1e1e1e;-webkit-text-stroke:0.2px #1e1e1e;left:50.40px;transform-origin:0 0;transform:scaleX(0.8039);">2</span>
<span class="t" style="top:227.52px;font-size:9.2px;color:#1e1e1e;-webkit-text-stroke:0.2px #1e1e1e;left:90.20px;transform-origin:0 0;transform:scaleX(0.8039);">3006</span>
<span class="t" style="top:227.52px;font-size:9.2px;color:#1e1e1e;-webkit-text-stroke:0.2px #1e1e1e;left:125.20px;transform-origin:0 0;transform:scaleX(0.8469);">PESTICIDA TIOCARBAMMATO LIQUIDO, TOSSICO</span>
<span class="t" style="top:227.52px;font-size:9.2px;color:#1e1e1e;-webkit-text-stroke:0.2px #1e1e1e;left:405.20px;transform-origin:0 0;transform:scaleX(0.8351);">6.1</span>
<span class="t" style="top:227.52px;font-size:9.2px;color:#1e1e1e;-webkit-text-stroke:0.2px #1e1e1e;left:440.20px;transform-origin:0 0;transform:scaleX(0.8413);">II</span>
<span class="t" style="top:227.52px;font-size:9.2px;color:#1e1e1e;-webkit-text-stroke:0.2px #1e1e1e;left:468.20px;transform-origin:0 0;transform:scaleX(0.8351);">6.1</span>
<span class="t" style="top:227.52px;font-size:9.2px;color:#1e1e1e;-webkit-text-stroke:0.2px #1e1e1e;left:552.20px;transform-origin:0 0;transform:scaleX(0.8039);">2</span>
<span class="t" style="top:227.52px;font-size:9.2px;color:#1e1e1e;-webkit-text-stroke:0.2px #1e1e1e;left:587.20px;transform-origin:0 0;transform:scaleX(0.8931);">Gas disciolti</span>
<span class="t" style="top:227.52px;font-size:9.2px;color:#1e1e1e;-webkit-text-stroke:0.2px #1e1e1e;left:727.20px;transform-origin:0 0;transform:scaleX(0.8934);">Massa netta kg</span>
<span class="t" style="top:227.52px;font-size:9.2px;color:#1e1e1e;-webkit-text-stroke:0.2px #1e1e1e;left:832.20px;transform-origin:0 0;transform:scaleX(0.8039);">1</span>
<span class="t" style="top:227.52px;font-size:9.2px;color:#1e1e1e;-webkit-text-stroke:0.2px #1e1e1e;left:888.20px;transform-origin:0 0;transform:scaleX(0.8693);">Kg</span>
<span class="t" style="top:246.43px;font-size:9.2px;color:#1e1e1e;-webkit-text-stroke:0.2px #1e1e1e;left:50.40px;transform-origin:0 0;transform:scaleX(0.8039);">3</span>
<span class="t" style="top:246.43px;font-size:9.2px;color:#1e1e1e;-webkit-text-stroke:0.2px #1e1e1e;left:90.20px;transform-origin:0 0;transform:scaleX(0.8039);">3009</span>
<span class="t" style="top:246.43px;font-size:9.2px;color:#1e1e1e;-webkit-text-stroke:0.2px #1e1e1e;left:125.20px;transform-origin:0 0;transform:scaleX(0.8536);">PESTICIDA RAMEICO LIQUIDO, TOSSICO, INFIAMMABILE, CON UN  PUN...</span>
<span class="t" style="top:246.43px;font-size:9.2px;color:#1e1e1e;-webkit-text-stroke:0.2px #1e1e1e;left:405.20px;transform-origin:0 0;transform:scaleX(0.8351);">6.1</span>
<span class="t" style="top:246.43px;font-size:9.2px;color:#1e1e1e;-webkit-text-stroke:0.2px #1e1e1e;left:440.20px;transform-origin:0 0;transform:scaleX(0.8413);">II</span>
<span class="t" style="top:246.43px;font-size:9.2px;color:#1e1e1e;-webkit-text-stroke:0.2px #1e1e1e;left:468.20px;transform-origin:0 0;transform:scaleX(0.8351);">6.1</span>
<span class="t" style="top:246.43px;font-size:9.2px;color:#1e1e1e;-webkit-text-stroke:0.2px #1e1e1e;left:497.20px;transform-origin:0 0;transform:scaleX(0.8039);">3</span>
<span class="t" style="top:246.43px;font-size:9.2px;color:#1e1e1e;-webkit-text-stroke:0.2px #1e1e1e;left:552.20px;transform-origin:0 0;transform:scaleX(0.8039);">2</span>
<span class="t" style="top:246.43px;font-size:9.2px;color:#1e1e1e;-webkit-text-stroke:0.2px #1e1e1e;left:587.20px;transform-origin:0 0;transform:scaleX(0.8937);">Materie liquide</span>
<span class="t" style="top:246.43px;font-size:9.2px;color:#1e1e1e;-webkit-text-stroke:0.2px #1e1e1e;left:727.20px;transform-origin:0 0;transform:scaleX(0.8953);">Capacità nominale del re...</span>
<span class="t" style="top:246.43px;font-size:9.2px;color:#1e1e1e;-webkit-text-stroke:0.2px #1e1e1e;left:832.20px;transform-origin:0 0;transform:scaleX(0.8039);">1</span>
<span class="t" style="top:246.43px;font-size:9.2px;color:#1e1e1e;-webkit-text-stroke:0.2px #1e1e1e;left:888.20px;transform-origin:0 0;transform:scaleX(0.8693);">Lt</span>
<span class="t" style="top:265.34px;font-size:9.2px;color:#1e1e1e;-webkit-text-stroke:0.2px #1e1e1e;left:50.40px;transform-origin:0 0;transform:scaleX(0.8039);">4</span>
<span class="t" style="top:265.34px;font-size:9.2px;color:#1e1e1e;-webkit-text-stroke:0.2px #1e1e1e;left:90.20px;transform-origin:0 0;transform:scaleX(0.8039);">2222</span>
<span class="t" style="top:265.34px;font-size:9.2px;color:#1e1e1e;-webkit-text-stroke:0.2px #1e1e1e;left:125.20px;transform-origin:0 0;transform:scaleX(0.8413);">ANISOLO</span>
<span class="t" style="top:265.34px;font-size:9.2px;color:#1e1e1e;-webkit-text-stroke:0.2px #1e1e1e;left:405.20px;transform-origin:0 0;transform:scaleX(0.8039);">3</span>
<span class="t" style="top:265.34px;font-size:9.2px;color:#1e1e1e;-webkit-text-stroke:0.2px #1e1e1e;left:440.20px;transform-origin:0 0;transform:scaleX(0.8413);">III</span>
<span class="t" style="top:265.34px;font-size:9.2px;color:#1e1e1e;-webkit-text-stroke:0.2px #1e1e1e;left:468.20px;transform-origin:0 0;transform:scaleX(0.8039);">3</span>
<span class="t" style="top:265.34px;font-size:9.2px;color:#1e1e1e;-webkit-text-stroke:0.2px #1e1e1e;left:552.20px;transform-origin:0 0;transform:scaleX(0.8039);">3</span>
<span class="t" style="top:265.34px;font-size:9.2px;color:#1e1e1e;-webkit-text-stroke:0.2px #1e1e1e;left:587.20px;transform-origin:0 0;transform:scaleX(0.8937);">Materie liquide</span>
<span class="t" style="top:265.34px;font-size:9.2px;color:#1e1e1e;-webkit-text-stroke:0.2px #1e1e1e;left:727.20px;transform-origin:0 0;transform:scaleX(0.8953);">Capacità nominale del re...</span>
<span class="t" style="top:265.34px;font-size:9.2px;color:#1e1e1e;-webkit-text-stroke:0.2px #1e1e1e;left:832.20px;transform-origin:0 0;transform:scaleX(0.8039);">10</span>
<span class="t" style="top:265.34px;font-size:9.2px;color:#1e1e1e;-webkit-text-stroke:0.2px #1e1e1e;left:888.20px;transform-origin:0 0;transform:scaleX(0.8693);">Lt</span>
<span class="t" style="top:284.25px;font-size:9.2px;color:#1e1e1e;-webkit-text-stroke:0.2px #1e1e1e;left:50.40px;transform-origin:0 0;transform:scaleX(0.8039);">5</span>
<span class="t" style="top:284.25px;font-size:9.2px;color:#1e1e1e;-webkit-text-stroke:0.2px #1e1e1e;left:90.20px;transform-origin:0 0;transform:scaleX(0.8039);">2225</span>
<span class="t" style="top:284.25px;font-size:9.2px;color:#1e1e1e;-webkit-text-stroke:0.2px #1e1e1e;left:125.20px;transform-origin:0 0;transform:scaleX(0.8456);">CLORURO DI BENZENSULFONILE</span>
<span class="t" style="top:284.25px;font-size:9.2px;color:#1e1e1e;-webkit-text-stroke:0.2px #1e1e1e;left:405.20px;transform-origin:0 0;transform:scaleX(0.8039);">8</span>
<span class="t" style="top:284.25px;font-size:9.2px;color:#1e1e1e;-webkit-text-stroke:0.2px #1e1e1e;left:440.20px;transform-origin:0 0;transform:scaleX(0.8413);">III</span>
<span class="t" style="top:284.25px;font-size:9.2px;color:#1e1e1e;-webkit-text-stroke:0.2px #1e1e1e;left:468.20px;transform-origin:0 0;transform:scaleX(0.8039);">8</span>
<span class="t" style="top:284.25px;font-size:9.2px;color:#1e1e1e;-webkit-text-stroke:0.2px #1e1e1e;left:552.20px;transform-origin:0 0;transform:scaleX(0.8039);">3</span>
<span class="t" style="top:284.25px;font-size:9.2px;color:#1e1e1e;-webkit-text-stroke:0.2px #1e1e1e;left:587.20px;transform-origin:0 0;transform:scaleX(0.8931);">Gas disciolti</span>
<span class="t" style="top:284.25px;font-size:9.2px;color:#1e1e1e;-webkit-text-stroke:0.2px #1e1e1e;left:727.20px;transform-origin:0 0;transform:scaleX(0.8934);">Massa netta kg</span>
<span class="t" style="top:284.25px;font-size:9.2px;color:#1e1e1e;-webkit-text-stroke:0.2px #1e1e1e;left:832.20px;transform-origin:0 0;transform:scaleX(0.8039);">20</span>
<span class="t" style="top:284.25px;font-size:9.2px;color:#1e1e1e;-webkit-text-stroke:0.2px #1e1e1e;left:888.20px;transform-origin:0 0;transform:scaleX(0.8693);">Kg</span>
<span class="t" style="top:303.16px;font-size:9.2px;color:#1e1e1e;-webkit-text-stroke:0.2px #1e1e1e;left:50.40px;transform-origin:0 0;transform:scaleX(0.8039);">6</span>
<span class="t" style="top:303.16px;font-size:9.2px;color:#1e1e1e;-webkit-text-stroke:0.2px #1e1e1e;left:90.20px;transform-origin:0 0;transform:scaleX(0.8039);">2257</span>
<span class="t" style="top:303.16px;font-size:9.2px;color:#1e1e1e;-webkit-text-stroke:0.2px #1e1e1e;left:125.20px;transform-origin:0 0;transform:scaleX(0.8413);">POTASSIO</span>
<span class="t" style="top:303.16px;font-size:9.2px;color:#1e1e1e;-webkit-text-stroke:0.2px #1e1e1e;left:405.20px;transform-origin:0 0;transform:scaleX(0.8351);">4.3</span>
<span class="t" style="top:303.16px;font-size:9.2px;color:#1e1e1e;-webkit-text-stroke:0.2px #1e1e1e;left:440.20px;transform-origin:0 0;transform:scaleX(0.8413);">I</span>
<span class="t" style="top:303.16px;font-size:9.2px;color:#1e1e1e;-webkit-text-stroke:0.2px #1e1e1e;left:468.20px;transform-origin:0 0;transform:scaleX(0.8351);">4.3</span>
<span class="t" style="top:303.16px;font-size:9.2px;color:#1e1e1e;-webkit-text-stroke:0.2px #1e1e1e;left:552.20px;transform-origin:0 0;transform:scaleX(0.8039);">1</span>
<span class="t" style="top:303.16px;font-size:9.2px;color:#1e1e1e;-webkit-text-stroke:0.2px #1e1e1e;left:587.20px;transform-origin:0 0;transform:scaleX(0.8934);">Gas liquefatti</span>
<span class="t" style="top:303.16px;font-size:9.2px;color:#1e1e1e;-webkit-text-stroke:0.2px #1e1e1e;left:727.20px;transform-origin:0 0;transform:scaleX(0.8934);">Massa netta kg</span>
<span class="t" style="top:303.16px;font-size:9.2px;color:#1e1e1e;-webkit-text-stroke:0.2px #1e1e1e;left:832.20px;transform-origin:0 0;transform:scaleX(0.8039);">9</span>
<span class="t" style="top:303.16px;font-size:9.2px;color:#1e1e1e;-webkit-text-stroke:0.2px #1e1e1e;left:888.20px;transform-origin:0 0;transform:scaleX(0.8693);">Kg</span>
<span class="t" style="top:322.07px;font-size:9.2px;color:#1e1e1e;-webkit-text-stroke:0.2px #1e1e1e;left:50.40px;transform-origin:0 0;transform:scaleX(0.8039);">7</span>
<span class="t" style="top:322.07px;font-size:9.2px;color:#1e1e1e;-webkit-text-stroke:0.2px #1e1e1e;left:90.20px;transform-origin:0 0;transform:scaleX(0.8039);">1239</span>
<span class="t" style="top:322.07px;font-size:9.2px;color:#1e1e1e;-webkit-text-stroke:0.2px #1e1e1e;left:125.20px;transform-origin:0 0;transform:scaleX(0.8436);">ETERE CLOROMETILMETILICO</span>
<span class="t" style="top:322.07px;font-size:9.2px;color:#1e1e1e;-webkit-text-stroke:0.2px #1e1e1e;left:405.20px;transform-origin:0 0;transform:scaleX(0.8351);">6.1</span>
<span class="t" style="top:322.07px;font-size:9.2px;color:#1e1e1e;-webkit-text-stroke:0.2px #1e1e1e;left:440.20px;transform-origin:0 0;transform:scaleX(0.8413);">I</span>
<span class="t" style="top:322.07px;font-size:9.2px;color:#1e1e1e;-webkit-text-stroke:0.2px #1e1e1e;left:468.20px;transform-origin:0 0;transform:scaleX(0.8351);">6.1</span>
<span class="t" style="top:322.07px;font-size:9.2px;color:#1e1e1e;-webkit-text-stroke:0.2px #1e1e1e;left:497.20px;transform-origin:0 0;transform:scaleX(0.8039);">3</span>
<span class="t" style="top:322.07px;font-size:9.2px;color:#1e1e1e;-webkit-text-stroke:0.2px #1e1e1e;left:552.20px;transform-origin:0 0;transform:scaleX(0.8039);">1</span>
<span class="t" style="top:322.07px;font-size:9.2px;color:#1e1e1e;-webkit-text-stroke:0.2px #1e1e1e;left:587.20px;transform-origin:0 0;transform:scaleX(0.8931);">Gas compressi</span>
<span class="t" style="top:322.07px;font-size:9.2px;color:#1e1e1e;-webkit-text-stroke:0.2px #1e1e1e;left:727.20px;transform-origin:0 0;transform:scaleX(0.8953);">Capacità nominale del re...</span>
<span class="t" style="top:322.07px;font-size:9.2px;color:#1e1e1e;-webkit-text-stroke:0.2px #1e1e1e;left:832.20px;transform-origin:0 0;transform:scaleX(0.8039);">6</span>
<span class="t" style="top:322.07px;font-size:9.2px;color:#1e1e1e;-webkit-text-stroke:0.2px #1e1e1e;left:888.20px;transform-origin:0 0;transform:scaleX(0.8693);">Lt</span>
<span class="t" style="top:340.98px;font-size:9.2px;color:#1e1e1e;-webkit-text-stroke:0.2px #1e1e1e;left:50.40px;transform-origin:0 0;transform:scaleX(0.8039);">8</span>
<span class="t" style="top:340.98px;font-size:9.2px;color:#1e1e1e;-webkit-text-stroke:0.2px #1e1e1e;left:90.20px;transform-origin:0 0;transform:scaleX(0.8039);">2350</span>
<span class="t" style="top:340.98px;font-size:9.2px;color:#1e1e1e;-webkit-text-stroke:0.2px #1e1e1e;left:125.20px;transform-origin:0 0;transform:scaleX(0.8443);">ETERE BUTILMETILICO</span>
<span class="t" style="top:340.98px;font-size:9.2px;color:#1e1e1e;-webkit-text-stroke:0.2px #1e1e1e;left:405.20px;transform-origin:0 0;transform:scaleX(0.8039);">3</span>
<span class="t" style="top:340.98px;font-size:9.2px;color:#1e1e1e;-webkit-text-stroke:0.2px #1e1e1e;left:440.20px;transform-origin:0 0;transform:scaleX(0.8413);">II</span>
<span class="t" style="top:340.98px;font-size:9.2px;color:#1e1e1e;-webkit-text-stroke:0.2px #1e1e1e;left:468.20px;transform-origin:0 0;transform:scaleX(0.8039);">3</span>
<span class="t" style="top:340.98px;font-size:9.2px;color:#1e1e1e;-webkit-text-stroke:0.2px #1e1e1e;left:552.20px;transform-origin:0 0;transform:scaleX(0.8039);">2</span>
<span class="t" style="top:340.98px;font-size:9.2px;color:#1e1e1e;-webkit-text-stroke:0.2px #1e1e1e;left:587.20px;transform-origin:0 0;transform:scaleX(0.8934);">Materie solide</span>
<span class="t" style="top:340.98px;font-size:9.2px;color:#1e1e1e;-webkit-text-stroke:0.2px #1e1e1e;left:727.20px;transform-origin:0 0;transform:scaleX(0.8934);">Massa netta kg</span>
<span class="t" style="top:340.98px;font-size:9.2px;color:#1e1e1e;-webkit-text-stroke:0.2px #1e1e1e;left:832.20px;transform-origin:0 0;transform:scaleX(0.8039);">10</span>
<span class="t" style="top:340.98px;font-size:9.2px;color:#1e1e1e;-webkit-text-stroke:0.2px #1e1e1e;left:888.20px;transform-origin:0 0;transform:scaleX(0.8693);">Kg</span>
<span class="t" style="top:359.89px;font-size:9.2px;color:#1e1e1e;-webkit-text-stroke:0.2px #1e1e1e;left:50.40px;transform-origin:0 0;transform:scaleX(0.8039);">9</span>
<span class="t" style="top:359.89px;font-size:9.2px;color:#1e1e1e;-webkit-text-stroke:0.2px #1e1e1e;left:90.20px;transform-origin:0 0;transform:scaleX(0.8039);">1234</span>
<span class="t" style="top:359.89px;font-size:9.2px;color:#1e1e1e;-webkit-text-stroke:0.2px #1e1e1e;left:125.20px;transform-origin:0 0;transform:scaleX(0.8413);">METILALE</span>
<span class="t" style="top:359.89px;font-size:9.2px;color:#1e1e1e;-webkit-text-stroke:0.2px #1e1e1e;left:405.20px;transform-origin:0 0;transform:scaleX(0.8039);">3</span>
<span class="t" style="top:359.89px;font-size:9.2px;color:#1e1e1e;-webkit-text-stroke:0.2px #1e1e1e;left:440.20px;transform-origin:0 0;transform:scaleX(0.8413);">II</span>
<span class="t" style="top:359.89px;font-size:9.2px;color:#1e1e1e;-webkit-text-stroke:0.2px #1e1e1e;left:468.20px;transform-origin:0 0;transform:scaleX(0.8039);">3</span>
<span class="t" style="top:359.89px;font-size:9.2px;color:#1e1e1e;-webkit-text-stroke:0.2px #1e1e1e;left:552.20px;transform-origin:0 0;transform:scaleX(0.8039);">2</span>
<span class="t" style="top:359.89px;font-size:9.2px;color:#1e1e1e;-webkit-text-stroke:0.2px #1e1e1e;left:587.20px;transform-origin:0 0;transform:scaleX(0.8952);">Gas liquefatti refrigerati</span>
<span class="t" style="top:359.89px;font-size:9.2px;color:#1e1e1e;-webkit-text-stroke:0.2px #1e1e1e;left:727.20px;transform-origin:0 0;transform:scaleX(0.8934);">Massa netta kg</span>
<span class="t" style="top:359.89px;font-size:9.2px;color:#1e1e1e;-webkit-text-stroke:0.2px #1e1e1e;left:832.20px;transform-origin:0 0;transform:scaleX(0.8039);">2</span>
<span class="t" style="top:359.89px;font-size:9.2px;color:#1e1e1e;-webkit-text-stroke:0.2px #1e1e1e;left:888.20px;transform-origin:0 0;transform:scaleX(0.8693);">Kg</span>
<span class="t" style="top:378.80px;font-size:9.2px;color:#1e1e1e;-webkit-text-stroke:0.2px #1e1e1e;left:50.40px;transform-origin:0 0;transform:scaleX(0.8039);">10</span>
<span class="t" style="top:378.80px;font-size:9.2px;color:#1e1e1e;-webkit-text-stroke:0.2px #1e1e1e;left:90.20px;transform-origin:0 0;transform:scaleX(0.8039);">2227</span>
<span class="t" style="top:378.80px;font-size:9.2px;color:#1e1e1e;-webkit-text-stroke:0.2px #1e1e1e;left:125.20px;transform-origin:0 0;transform:scaleX(0.8475);">METACRILATO DI N-BUTILE STABILIZZATO</span>
<span class="t" style="top:378.80px;font-size:9.2px;color:#1e1e1e;-webkit-text-stroke:0.2px #1e1e1e;left:405.20px;transform-origin:0 0;transform:scaleX(0.8039);">3</span>
<span class="t" style="top:378.80px;font-size:9.2px;color:#1e1e1e;-webkit-text-stroke:0.2px #1e1e1e;left:440.20px;transform-origin:0 0;transform:scaleX(0.8413);">III</span>
<span class="t" style="top:378.80px;font-size:9.2px;color:#1e1e1e;-webkit-text-stroke:0.2px #1e1e1e;left:468.20px;transform-origin:0 0;transform:scaleX(0.8039);">3</span>
<span class="t" style="top:378.80px;font-size:9.2px;color:#1e1e1e;-webkit-text-stroke:0.2px #1e1e1e;left:552.20px;transform-origin:0 0;transform:scaleX(0.8039);">3</span>
<span class="t" style="top:378.80px;font-size:9.2px;color:#1e1e1e;-webkit-text-stroke:0.2px #1e1e1e;left:587.20px;transform-origin:0 0;transform:scaleX(0.8952);">Gas liquefatti refrigerati</span>
<span class="t" style="top:378.80px;font-size:9.2px;color:#1e1e1e;-webkit-text-stroke:0.2px #1e1e1e;left:727.20px;transform-origin:0 0;transform:scaleX(0.8934);">Massa netta kg</span>
<span class="t" style="top:378.80px;font-size:9.2px;color:#1e1e1e;-webkit-text-stroke:0.2px #1e1e1e;left:832.20px;transform-origin:0 0;transform:scaleX(0.8039);">12</span>
<span class="t" style="top:378.80px;font-size:9.2px;color:#1e1e1e;-webkit-text-stroke:0.2px #1e1e1e;left:888.20px;transform-origin:0 0;transform:scaleX(0.8693);">Kg</span>
<span class="t" style="top:397.71px;font-size:9.2px;color:#1e1e1e;-webkit-text-stroke:0.2px #1e1e1e;left:50.40px;transform-origin:0 0;transform:scaleX(0.8039);">11</span>
<span class="t" style="top:397.71px;font-size:9.2px;color:#1e1e1e;-webkit-text-stroke:0.2px #1e1e1e;left:90.20px;transform-origin:0 0;transform:scaleX(0.8039);">3006</span>
<span class="t" style="top:397.71px;font-size:9.2px;color:#1e1e1e;-webkit-text-stroke:0.2px #1e1e1e;left:125.20px;transform-origin:0 0;transform:scaleX(0.8469);">PESTICIDA TIOCARBAMMATO LIQUIDO, TOSSICO</span>
<span class="t" style="top:397.71px;font-size:9.2px;color:#1e1e1e;-webkit-text-stroke:0.2px #1e1e1e;left:405.20px;transform-origin:0 0;transform:scaleX(0.8351);">6.1</span>
<span class="t" style="top:397.71px;font-size:9.2px;color:#1e1e1e;-webkit-text-stroke:0.2px #1e1e1e;left:440.20px;transform-origin:0 0;transform:scaleX(0.8413);">II</span>
<span class="t" style="top:397.71px;font-size:9.2px;color:#1e1e1e;-webkit-text-stroke:0.2px #1e1e1e;left:468.20px;transform-origin:0 0;transform:scaleX(0.8351);">6.1</span>
<span class="t" style="top:397.71px;font-size:9.2px;color:#1e1e1e;-webkit-text-stroke:0.2px #1e1e1e;left:552.20px;transform-origin:0 0;transform:scaleX(0.8039);">2</span>
<span class="t" style="top:397.71px;font-size:9.2px;color:#1e1e1e;-webkit-text-stroke:0.2px #1e1e1e;left:587.20px;transform-origin:0 0;transform:scaleX(0.8894);">Oggetti</span>
<span class="t" style="top:397.71px;font-size:9.2px;color:#1e1e1e;-webkit-text-stroke:0.2px #1e1e1e;left:727.20px;transform-origin:0 0;transform:scaleX(0.8934);">Massa lorda kg</span>
<span class="t" style="top:397.71px;font-size:9.2px;color:#1e1e1e;-webkit-text-stroke:0.2px #1e1e1e;left:832.20px;transform-origin:0 0;transform:scaleX(0.8039);">1</span>
<span class="t" style="top:397.71px;font-size:9.2px;color:#1e1e1e;-webkit-text-stroke:0.2px #1e1e1e;left:888.20px;transform-origin:0 0;transform:scaleX(0.8693);">Kg</span>
<span class="t" style="top:416.62px;font-size:9.2px;color:#1e1e1e;-webkit-text-stroke:0.2px #1e1e1e;left:50.40px;transform-origin:0 0;transform:scaleX(0.8039);">12</span>
<span class="t" style="top:416.62px;font-size:9.2px;color:#1e1e1e;-webkit-text-stroke:0.2px #1e1e1e;left:90.20px;transform-origin:0 0;transform:scaleX(0.8039);">3009</span>
<span class="t" style="top:416.62px;font-size:9.2px;color:#1e1e1e;-webkit-text-stroke:0.2px #1e1e1e;left:125.20px;transform-origin:0 0;transform:scaleX(0.8520);">PESTICIDA RAMEICO LIQUIDO, TOSSICO, INFIAMMABILE CON UN PUNT...</span>
<span class="t" style="top:416.62px;font-size:9.2px;color:#1e1e1e;-webkit-text-stroke:0.2px #1e1e1e;left:405.20px;transform-origin:0 0;transform:scaleX(0.8351);">6.1</span>
<span class="t" style="top:416.62px;font-size:9.2px;color:#1e1e1e;-webkit-text-stroke:0.2px #1e1e1e;left:440.20px;transform-origin:0 0;transform:scaleX(0.8413);">III</span>
<span class="t" style="top:416.62px;font-size:9.2px;color:#1e1e1e;-webkit-text-stroke:0.2px #1e1e1e;left:468.20px;transform-origin:0 0;transform:scaleX(0.8351);">6.1</span>
<span class="t" style="top:416.62px;font-size:9.2px;color:#1e1e1e;-webkit-text-stroke:0.2px #1e1e1e;left:497.20px;transform-origin:0 0;transform:scaleX(0.8039);">3</span>
<span class="t" style="top:416.62px;font-size:9.2px;color:#1e1e1e;-webkit-text-stroke:0.2px #1e1e1e;left:552.20px;transform-origin:0 0;transform:scaleX(0.8039);">2</span>
<span class="t" style="top:416.62px;font-size:9.2px;color:#1e1e1e;-webkit-text-stroke:0.2px #1e1e1e;left:587.20px;transform-origin:0 0;transform:scaleX(0.8934);">Materie solide</span>
<span class="t" style="top:416.62px;font-size:9.2px;color:#1e1e1e;-webkit-text-stroke:0.2px #1e1e1e;left:727.20px;transform-origin:0 0;transform:scaleX(0.8934);">Massa netta kg</span>
<span class="t" style="top:416.62px;font-size:9.2px;color:#1e1e1e;-webkit-text-stroke:0.2px #1e1e1e;left:832.20px;transform-origin:0 0;transform:scaleX(0.8039);">2</span>
<span class="t" style="top:416.62px;font-size:9.2px;color:#1e1e1e;-webkit-text-stroke:0.2px #1e1e1e;left:888.20px;transform-origin:0 0;transform:scaleX(0.8693);">Kg</span>
<span class="t" style="top:516.81px;font-size:9.2px;color:#111;-webkit-text-stroke:0.2px #111;font-weight:bold;left:33.90px;transform-origin:0 0;transform:scaleX(0.8913);">In esenzione parziale per quantità limitate</span>
<span class="t" style="top:516.81px;font-size:9.2px;color:#1e1e1e;-webkit-text-stroke:0.2px #1e1e1e;left:647.60px;transform-origin:0 0;transform:scaleX(0.8974);">Il quantitativo di materie trasportate risulta essere:</span>
<span class="t" style="top:516.81px;font-size:9.2px;color:#1e1e1e;-webkit-text-stroke:0.2px #1e1e1e;right:16.40px;transform-origin:100% 0;transform:scaleX(0.8039);">383</span>
<span class="t" style="top:546.41px;font-size:9.2px;color:#1e1e1e;-webkit-text-stroke:0.2px #1e1e1e;left:710.90px;transform-origin:0 0;transform:scaleX(0.8139);">ADR 2019</span>
<span class="t" style="top:546.41px;font-size:9.2px;color:#1e1e1e;-webkit-text-stroke:0.2px #1e1e1e;left:765.00px;transform-origin:0 0;transform:scaleX(0.8987);">adrman</span>
<span class="t" style="top:546.41px;font-size:9.2px;color:#1e1e1e;-webkit-text-stroke:0.2px #1e1e1e;left:812.00px;transform-origin:0 0;transform:scaleX(0.8610);">05/11/2019 15:02:47</span>
</body></html>
